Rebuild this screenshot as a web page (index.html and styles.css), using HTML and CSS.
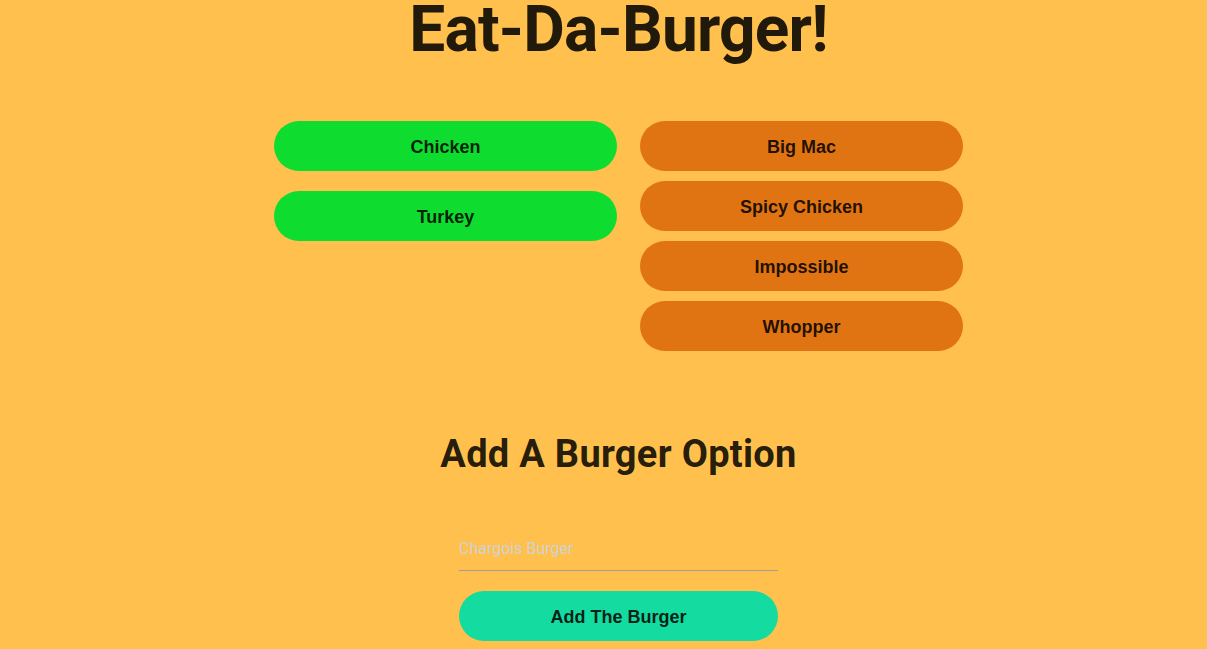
FILE: index.html
```html
<!DOCTYPE html>
<html lang="en">
<head>
<meta charset="utf-8">
<title>Eat-Da-Burger!</title>
<link rel="stylesheet" href="styles.css">
</head>
<body>
<h1 class="title">Eat-Da-Burger!</h1>
<div class="menu">
  <div class="col col-left">
    <button class="pill pill-green">Chicken</button>
    <button class="pill pill-green">Turkey</button>
  </div>
  <div class="col col-right">
    <button class="pill pill-orange">Big Mac</button>
    <button class="pill pill-orange">Spicy Chicken</button>
    <button class="pill pill-orange">Impossible</button>
    <button class="pill pill-orange">Whopper</button>
  </div>
</div>
<h2 class="subtitle">Add A Burger Option</h2>
<form class="add-form">
  <input class="burger-input" type="text" placeholder="Chargois Burger">
  <button type="button" class="pill pill-teal">Add The Burger</button>
</form>
</body>
</html>
```

FILE: styles.css
```css
html, body {
  margin: 0;
  padding: 0;
}
body {
  background: #FFC04D;
  color: rgba(0, 0, 0, 0.87);
  font-family: "Liberation Sans", Arial, sans-serif;
  padding-left: 30px;
  overflow: hidden;
}
.title {
  margin: 0;
  text-align: center;
  font-family: Roboto, "Liberation Sans", sans-serif;
  font-size: 64px;
  line-height: 60px;
  font-weight: 700;
  letter-spacing: -0.8px;
}
.menu {
  margin-top: 61px;
  display: grid;
  grid-template-columns: 343px 323px;
  column-gap: 23px;
  justify-content: center;
  align-items: start;
}
.col {
  display: flex;
  flex-direction: column;
}
.col-left { gap: 20px; }
.col-right { gap: 10px; }
.pill {
  display: block;
  box-sizing: border-box;
  width: 100%;
  height: 50px;
  border: none;
  border-radius: 25px;
  padding: 2px 0 0;
  font-family: "Liberation Sans", Arial, sans-serif;
  font-weight: 700;
  font-size: 18px;
  line-height: 48px;
  color: rgba(0, 0, 0, 0.87);
  text-align: center;
  cursor: pointer;
}
.pill-green { background: #0EDC2F; }
.pill-orange { background: #E07412; }
.pill-teal { background: #14DB9F; margin-top: 20px; }
.subtitle {
  margin: 80px 0 0;
  text-align: center;
  font-family: Roboto, "Liberation Sans", sans-serif;
  font-size: 38px;
  line-height: 46px;
  font-weight: 700;
  letter-spacing: 0.3px;
}
.add-form {
  width: 319px;
  margin: 46px auto 0;
  display: flex;
  flex-direction: column;
}
.burger-input {
  box-sizing: border-box;
  width: 100%;
  height: 48px;
  padding: 4px 0 0;
  margin: 0;
  border: none;
  border-bottom: 1px solid #9e9e9e;
  background: transparent;
  outline: none;
  font-family: Roboto, sans-serif;
  font-size: 16px;
  color: rgba(0, 0, 0, 0.87);
}
.burger-input::placeholder {
  color: #d1d1d1;
}
```
